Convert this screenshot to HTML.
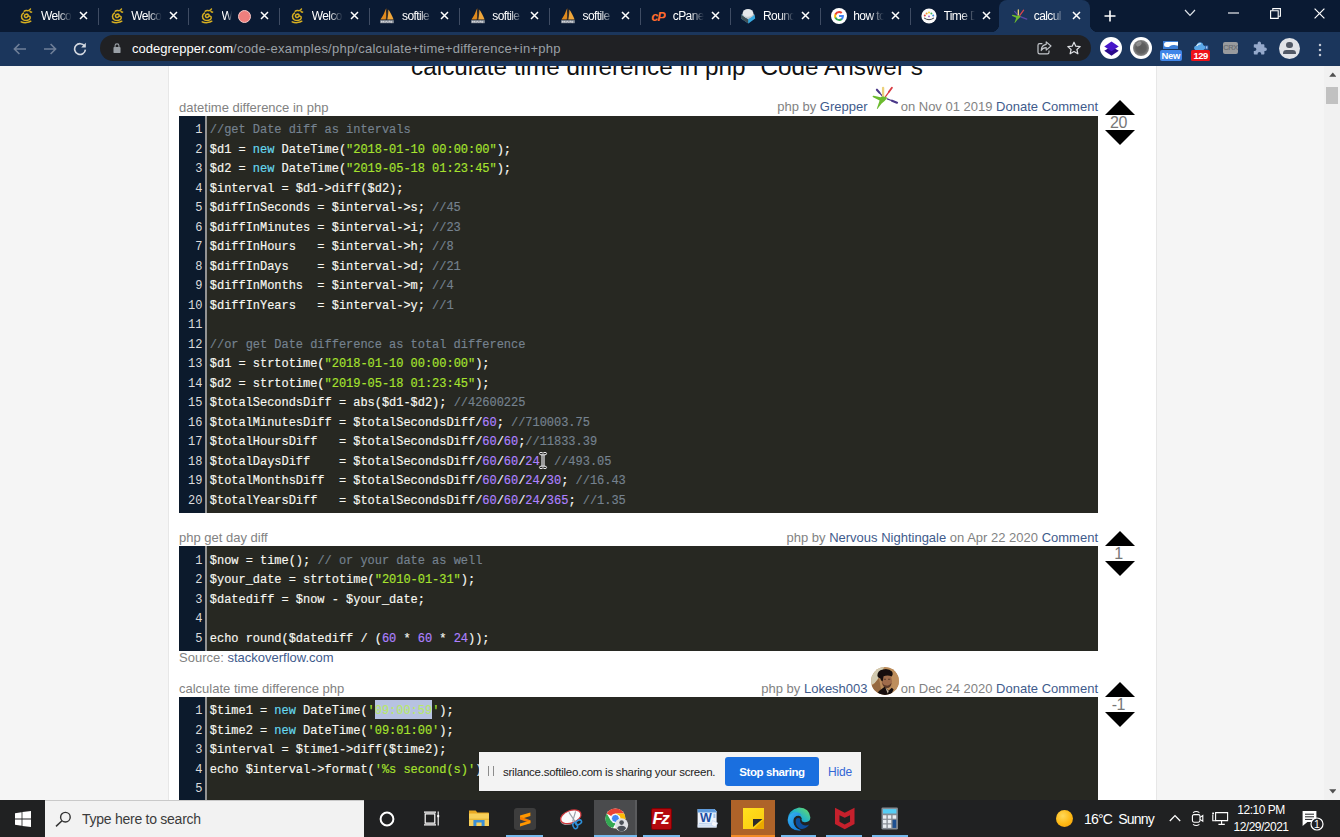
<!DOCTYPE html>
<html lang="en">
<head>
<meta charset="utf-8">
<title>calculate time difference in php Code Example</title>
<style>
*{box-sizing:border-box;}
html,body{margin:0;padding:0;}
body{width:1340px;height:837px;overflow:hidden;position:relative;background:#f5f5f5;font-family:"Liberation Sans",Arial,sans-serif;}
.abs{position:absolute;}
/* ---------- browser chrome ---------- */
#tabstrip{position:absolute;left:0;top:0;width:1340px;height:32px;background:#0a1a33;}
#toolbar{position:absolute;left:0;top:32px;width:1340px;height:34px;background:#1b365c;}
.tab{position:absolute;top:0;height:32px;width:90px;color:#fff;font-size:12px;}
.tab .fav{position:absolute;left:10.4px;top:8px;}
.tab .ttl{position:absolute;left:33px;top:8px;overflow:hidden;white-space:nowrap;line-height:16px;letter-spacing:-0.6px;-webkit-mask-image:linear-gradient(90deg,#000 55%,transparent 100%);mask-image:linear-gradient(90deg,#000 55%,transparent 100%);}
.tab .x{position:absolute;left:71px;top:11.2px;}
.tab .sep{position:absolute;left:90px;top:8px;width:1px;height:17px;background:#3f4c63;}
.tab .rec{position:absolute;left:49.5px;top:9.5px;width:13px;height:13px;border-radius:50%;background:#ee7f7d;border:1.5px solid #f7c9c7;}
#activetab{position:absolute;left:999px;top:0;width:91px;height:32px;background:#1b365c;border-radius:8px 8px 0 0;}
#activetab:before,#activetab:after{content:"";position:absolute;bottom:0;width:8px;height:8px;}
#activetab:before{left:-8px;background:radial-gradient(circle at 0 0,transparent 8px,#1b365c 8.5px);}
#activetab:after{right:-8px;background:radial-gradient(circle at 100% 0,transparent 8px,#1b365c 8.5px);}
#urlpill{position:absolute;left:100px;top:3.4px;width:991px;height:26px;border-radius:13px;background:#202124;}
#url{position:absolute;left:32px;top:5.5px;font-size:13px;line-height:16px;color:#9aa0a6;white-space:nowrap;letter-spacing:0.235px;}
#url b{font-weight:normal;color:#fff;letter-spacing:0.04px;}
/* ---------- page ---------- */
#page{position:absolute;left:0;top:66px;width:1324px;height:734px;background:#f5f5f5;overflow:hidden;}
#col{position:absolute;left:168px;top:0;width:989px;height:734px;background:#fff;border-left:1px solid #e7e7e7;border-right:1px solid #e7e7e7;}
#scroll{position:absolute;left:1324px;top:66px;width:16px;height:734px;background:#f1f1f1;}

/* ---------- answers ---------- */
.hd{position:absolute;left:10px;width:919px;height:18px;font-size:13px;line-height:18px;color:#828282;white-space:nowrap;}
.hd .ic{display:inline-block;width:25.9px;height:10px;position:relative;vertical-align:baseline;}
.hd .l{position:absolute;left:0;top:0;}
.hd .r{position:absolute;right:0;top:0;}
.hd .r.up{top:-0.6px;}
.hd a,.src a{color:#3f5b8c;text-decoration:none;}
.cb{position:absolute;left:10px;width:919px;background:#272822;overflow:hidden;}
.cb .gut{position:absolute;left:0;top:0;bottom:0;width:28px;background:#0c1a2c;border-right:2px solid #939393;}
.cb .ln,.cb .cl{font-family:"Liberation Mono","DejaVu Sans Mono",monospace;font-size:12px;line-height:19.5px;height:19.5px;white-space:pre;letter-spacing:-0.03px;}
.cb .cl{-webkit-text-stroke:0.16px;}
.cb .nums{position:absolute;left:0;top:5.8px;width:23.4px;text-align:right;color:#dcdcdc;}
.cb .code{position:absolute;left:30.8px;top:5.8px;color:#f8f8f2;}
.c{color:#75828f;}.s{color:#a6e22e;}.k{color:#66d9ef;}.n{color:#ae81ff;}
.sel{color:#b9e86b;display:inline-block;height:19.5px;vertical-align:top;position:relative;isolation:isolate;}
.sel:before{content:"";position:absolute;left:0;right:0;top:-2.9px;height:19.9px;background:#b7c2e2;z-index:-1;}
.src{position:absolute;left:10px;font-size:13px;line-height:18px;color:#828282;white-space:nowrap;}
.vote{position:absolute;left:935.6px;width:30px;height:45px;}
.vote .up{position:absolute;left:0;top:0;width:0;height:0;border-left:15px solid transparent;border-right:15px solid transparent;border-bottom:15px solid #000;}
.vote .dn{position:absolute;left:0;top:30px;width:0;height:0;border-left:15px solid transparent;border-right:15px solid transparent;border-top:15px solid #000;}
.vote .v{position:absolute;left:-1.2px;top:14.2px;width:30px;text-align:center;font-size:16px;line-height:18px;color:#777;letter-spacing:-0.5px;}
#h1{position:absolute;left:0;top:-13px;width:988px;text-align:center;font-size:24.3px;line-height:28px;color:#111;white-space:nowrap;}
/* ---------- taskbar ---------- */
#taskbar{position:absolute;left:0;top:800px;width:1340px;height:37px;background:#202122;}
#search{position:absolute;left:45px;top:0;width:319px;height:37px;background:#f2f2f2;border-top:1px solid #c9c9c9;}
.ul{position:absolute;top:35px;height:2px;background:#76b9ed;}
.tk{position:absolute;top:0;height:37px;}
#stxt{position:absolute;left:37px;top:9px;font-size:14px;line-height:18px;color:#3b3b3b;letter-spacing:-0.26px;white-space:nowrap;}
.tray{position:absolute;color:#fff;white-space:nowrap;}
/* share bar */
#share{position:absolute;left:479px;top:752px;width:382px;height:39px;background:#f3f3f3;font-size:12px;color:#222;box-shadow:0 0 1px rgba(0,0,0,.5);}
#share .t{position:absolute;left:24px;top:11.5px;line-height:16px;white-space:nowrap;font-size:11.5px;letter-spacing:-0.24px;}
#share .b{position:absolute;left:246px;top:5px;width:94px;height:29px;border-radius:3px;background:#1a6fdf;color:#fff;font-weight:bold;text-align:center;line-height:30.5px;font-size:11.5px;letter-spacing:-0.4px;}
#share .h{position:absolute;left:349px;top:11.5px;line-height:16px;color:#3367d6;letter-spacing:-0.2px;}
#share .g{position:absolute;left:9px;top:14px;width:6px;height:10px;border-left:1.5px solid #8c8c8c;border-right:1.5px solid #8c8c8c;}
</style>
</head>
<body>
<div id="tabstrip"><div id="activetab"></div>
<div class="tab" style="left:8.00px"><svg class="fav" width="16" height="16" viewBox="0 0 16 16" fill="none" stroke="#d6ae20" stroke-width="1.5" stroke-linecap="round"><path d="M10.2 7.2C9.4 5.6 6.6 5.8 6.4 7.8C6.2 9.6 8.6 10 9.4 8.8M9.4 8.8C10.4 7.4 12.6 8 12.2 10.2C11.8 12.4 8 13.2 5.4 11.8C2.6 10.2 3 6.4 5.6 5M3.2 13.8C6 15.2 10.8 14.8 12.8 13.2"/><path d="M6.2 3.2C7.6 1.8 9.6 3.2 11 2.4C11.8 2 12.2 1.4 12.4 1"/><path d="M12 3.4C12.6 4.2 13.2 4.4 13.6 4"/></svg><span class="ttl" style="width:31px">Welco</span><svg class="x" width="9" height="9" viewBox="0 0 9 9"><path d="M1 1L8 8M8 1L1 8" stroke="#fff" stroke-width="1.5"/></svg><span class="sep"></span></div>
<div class="tab" style="left:98.25px"><svg class="fav" width="16" height="16" viewBox="0 0 16 16" fill="none" stroke="#d6ae20" stroke-width="1.5" stroke-linecap="round"><path d="M10.2 7.2C9.4 5.6 6.6 5.8 6.4 7.8C6.2 9.6 8.6 10 9.4 8.8M9.4 8.8C10.4 7.4 12.6 8 12.2 10.2C11.8 12.4 8 13.2 5.4 11.8C2.6 10.2 3 6.4 5.6 5M3.2 13.8C6 15.2 10.8 14.8 12.8 13.2"/><path d="M6.2 3.2C7.6 1.8 9.6 3.2 11 2.4C11.8 2 12.2 1.4 12.4 1"/><path d="M12 3.4C12.6 4.2 13.2 4.4 13.6 4"/></svg><span class="ttl" style="width:31px">Welco</span><svg class="x" width="9" height="9" viewBox="0 0 9 9"><path d="M1 1L8 8M8 1L1 8" stroke="#fff" stroke-width="1.5"/></svg><span class="sep"></span></div>
<div class="tab" style="left:188.50px"><svg class="fav" width="16" height="16" viewBox="0 0 16 16" fill="none" stroke="#d6ae20" stroke-width="1.5" stroke-linecap="round"><path d="M10.2 7.2C9.4 5.6 6.6 5.8 6.4 7.8C6.2 9.6 8.6 10 9.4 8.8M9.4 8.8C10.4 7.4 12.6 8 12.2 10.2C11.8 12.4 8 13.2 5.4 11.8C2.6 10.2 3 6.4 5.6 5M3.2 13.8C6 15.2 10.8 14.8 12.8 13.2"/><path d="M6.2 3.2C7.6 1.8 9.6 3.2 11 2.4C11.8 2 12.2 1.4 12.4 1"/><path d="M12 3.4C12.6 4.2 13.2 4.4 13.6 4"/></svg><span class="ttl" style="width:10px">W</span><span class="rec"></span><svg class="x" width="9" height="9" viewBox="0 0 9 9"><path d="M1 1L8 8M8 1L1 8" stroke="#fff" stroke-width="1.5"/></svg><span class="sep"></span></div>
<div class="tab" style="left:278.75px"><svg class="fav" width="16" height="16" viewBox="0 0 16 16" fill="none" stroke="#d6ae20" stroke-width="1.5" stroke-linecap="round"><path d="M10.2 7.2C9.4 5.6 6.6 5.8 6.4 7.8C6.2 9.6 8.6 10 9.4 8.8M9.4 8.8C10.4 7.4 12.6 8 12.2 10.2C11.8 12.4 8 13.2 5.4 11.8C2.6 10.2 3 6.4 5.6 5M3.2 13.8C6 15.2 10.8 14.8 12.8 13.2"/><path d="M6.2 3.2C7.6 1.8 9.6 3.2 11 2.4C11.8 2 12.2 1.4 12.4 1"/><path d="M12 3.4C12.6 4.2 13.2 4.4 13.6 4"/></svg><span class="ttl" style="width:31px">Welco</span><svg class="x" width="9" height="9" viewBox="0 0 9 9"><path d="M1 1L8 8M8 1L1 8" stroke="#fff" stroke-width="1.5"/></svg><span class="sep"></span></div>
<div class="tab" style="left:369.00px"><svg class="fav" width="16" height="16" viewBox="0 0 16 16"><path d="M6.6 0.8C7.4 4.6 7.4 8 6.8 11.4H1.4C3.8 8.6 5.6 5 6.6 0.8Z" fill="#e08a1e"/><path d="M9.4 1.6C11.4 4.6 13.2 8 14.6 11.4H8.2C9 8.2 9.4 5 9.4 1.6Z" fill="#f0a63a"/><path d="M7.6 0.6C8.4 4 8.2 8 7.6 11.4" stroke="#7a4a12" stroke-width="0.7" fill="none"/><rect x="1.2" y="12.2" width="13.6" height="3" fill="#8d939c"/><path d="M2.4 14.6V12.9L3.6 14.2L4.8 12.9V14.6M6.2 14.6L7.4 12.9L8.6 14.6M10 14.6V12.9L12.4 14.6V12.9" stroke="#e9ebef" stroke-width="0.7" fill="none"/></svg><span class="ttl" style="width:31px">softile</span><svg class="x" width="9" height="9" viewBox="0 0 9 9"><path d="M1 1L8 8M8 1L1 8" stroke="#fff" stroke-width="1.5"/></svg><span class="sep"></span></div>
<div class="tab" style="left:459.25px"><svg class="fav" width="16" height="16" viewBox="0 0 16 16"><path d="M6.6 0.8C7.4 4.6 7.4 8 6.8 11.4H1.4C3.8 8.6 5.6 5 6.6 0.8Z" fill="#e08a1e"/><path d="M9.4 1.6C11.4 4.6 13.2 8 14.6 11.4H8.2C9 8.2 9.4 5 9.4 1.6Z" fill="#f0a63a"/><path d="M7.6 0.6C8.4 4 8.2 8 7.6 11.4" stroke="#7a4a12" stroke-width="0.7" fill="none"/><rect x="1.2" y="12.2" width="13.6" height="3" fill="#8d939c"/><path d="M2.4 14.6V12.9L3.6 14.2L4.8 12.9V14.6M6.2 14.6L7.4 12.9L8.6 14.6M10 14.6V12.9L12.4 14.6V12.9" stroke="#e9ebef" stroke-width="0.7" fill="none"/></svg><span class="ttl" style="width:31px">softile</span><svg class="x" width="9" height="9" viewBox="0 0 9 9"><path d="M1 1L8 8M8 1L1 8" stroke="#fff" stroke-width="1.5"/></svg><span class="sep"></span></div>
<div class="tab" style="left:549.50px"><svg class="fav" width="16" height="16" viewBox="0 0 16 16"><path d="M6.6 0.8C7.4 4.6 7.4 8 6.8 11.4H1.4C3.8 8.6 5.6 5 6.6 0.8Z" fill="#e08a1e"/><path d="M9.4 1.6C11.4 4.6 13.2 8 14.6 11.4H8.2C9 8.2 9.4 5 9.4 1.6Z" fill="#f0a63a"/><path d="M7.6 0.6C8.4 4 8.2 8 7.6 11.4" stroke="#7a4a12" stroke-width="0.7" fill="none"/><rect x="1.2" y="12.2" width="13.6" height="3" fill="#8d939c"/><path d="M2.4 14.6V12.9L3.6 14.2L4.8 12.9V14.6M6.2 14.6L7.4 12.9L8.6 14.6M10 14.6V12.9L12.4 14.6V12.9" stroke="#e9ebef" stroke-width="0.7" fill="none"/></svg><span class="ttl" style="width:31px">softile</span><svg class="x" width="9" height="9" viewBox="0 0 9 9"><path d="M1 1L8 8M8 1L1 8" stroke="#fff" stroke-width="1.5"/></svg><span class="sep"></span></div>
<div class="tab" style="left:639.75px"><svg class="fav" width="16" height="16" viewBox="0 0 16 16"><text x="8" y="12.6" text-anchor="middle" font-family="Liberation Sans, sans-serif" font-size="12.5" font-weight="bold" font-style="italic" fill="#ff6c2c" letter-spacing="-0.8">cP</text></svg><span class="ttl" style="width:31px">cPanel</span><svg class="x" width="9" height="9" viewBox="0 0 9 9"><path d="M1 1L8 8M8 1L1 8" stroke="#fff" stroke-width="1.5"/></svg><span class="sep"></span></div>
<div class="tab" style="left:730.00px"><svg class="fav" width="16" height="16" viewBox="0 0 16 16"><path d="M1 10.4L8.4 15.4L15.2 10.6L14.6 6.6L8.2 10.6L1.6 6.2Z" fill="#37a9e1"/><path d="M1.2 6.6L8.2 11.4V15.6L1 10.6Z" fill="#404f54"/><ellipse cx="8" cy="5.6" rx="5.4" ry="4.6" fill="#e6e8ea"/><path d="M2.6 6C4 9.6 11.6 10 13.4 5.8L14.4 7L8.2 11.2L1.6 6.8Z" fill="#c5c9cc"/></svg><span class="ttl" style="width:31px">Round</span><svg class="x" width="9" height="9" viewBox="0 0 9 9"><path d="M1 1L8 8M8 1L1 8" stroke="#fff" stroke-width="1.5"/></svg><span class="sep"></span></div>
<div class="tab" style="left:820.25px"><svg class="fav" width="16" height="16" viewBox="0 0 16 16"><circle cx="8" cy="8" r="8" fill="#fff"/><path d="M12.9 8.1c0-.36-.03-.7-.09-1.03H8.1v1.96h2.7a2.3 2.3 0 0 1-1 1.5v1.26h1.62c.95-.87 1.48-2.15 1.48-3.69z" fill="#4285f4"/><path d="M8.1 13c1.35 0 2.48-.45 3.31-1.21l-1.62-1.26c-.45.3-1.02.48-1.69.48-1.3 0-2.4-.88-2.8-2.06H3.63v1.3A5 5 0 0 0 8.1 13z" fill="#34a853"/><path d="M5.3 8.95a3 3 0 0 1 0-1.9v-1.3H3.63a5 5 0 0 0 0 4.5l1.67-1.3z" fill="#fbbc05"/><path d="M8.1 4.99c.73 0 1.39.25 1.9.75l1.43-1.43A4.8 4.8 0 0 0 8.1 3a5 5 0 0 0-4.47 2.75l1.67 1.3c.4-1.18 1.5-2.06 2.8-2.06z" fill="#ea4335"/></svg><span class="ttl" style="width:31px">how to</span><svg class="x" width="9" height="9" viewBox="0 0 9 9"><path d="M1 1L8 8M8 1L1 8" stroke="#fff" stroke-width="1.5"/></svg><span class="sep"></span></div>
<div class="tab" style="left:910.50px"><svg class="fav" width="16" height="16" viewBox="0 0 16 16"><circle cx="8" cy="8" r="7.6" fill="#fbfbfb"/><path d="M3.4 10.2Q8 13.4 12.6 10.2" stroke="#3b3b3b" stroke-width="1" fill="none" stroke-linecap="round"/><circle cx="3.8" cy="7.6" r="1" fill="#e8453c"/><circle cx="5.6" cy="5.4" r="1" fill="#f29a2e"/><circle cx="8" cy="4.4" r="1" fill="#f3d232"/><circle cx="10.4" cy="5.4" r="1" fill="#3eb55f"/><circle cx="12.2" cy="7.6" r="1" fill="#3d8be0"/><circle cx="8" cy="8.4" r="0.9" fill="#9a59c9"/></svg><span class="ttl" style="width:31px">Time D</span><svg class="x" width="9" height="9" viewBox="0 0 9 9"><path d="M1 1L8 8M8 1L1 8" stroke="#fff" stroke-width="1.5"/></svg></div>
<div class="tab" style="left:1000.75px"><svg class="fav" width="17" height="16" viewBox="0 0 28 25" style="overflow:visible"><g stroke-linecap="round" fill="none"><path d="M11.6 11.4L5.9 4.9" stroke="#5b48a8" stroke-width="2"/><path d="M12.1 11V2.6" stroke="#ecd078" stroke-width="2.2"/><path d="M14.5 11.6L20.8 2.9" stroke="#e0454c" stroke-width="2"/><path d="M16.2 13.9L26 17.6" stroke="#5b48a8" stroke-width="2"/></g><path d="M1.6 11.2Q1.8 10.3 3 10.6L9.4 12.2Q12.5 10.6 16.4 12.8Q14 16 10.6 18.6L6.4 23.9Q5.8 24.2 5.9 23.4L8.6 15.2L2.2 12.4Q1.4 12 1.6 11.2Z" fill="#6cbb2f"/></svg><span class="ttl" style="width:31px">calcul</span><svg class="x" width="9" height="9" viewBox="0 0 9 9"><path d="M1 1L8 8M8 1L1 8" stroke="#fff" stroke-width="1.5"/></svg></div>
<svg class="abs" style="left:1104px;top:10px" width="12" height="12" viewBox="0 0 12 12"><path d="M6 0.5V11.5M0.5 6H11.5" stroke="#fff" stroke-width="1.6"/></svg>
<svg class="abs" style="left:1184px;top:9px" width="12" height="8" viewBox="0 0 12 8"><path d="M1 1L6 6.4L11 1" stroke="#dfe3ea" stroke-width="1.2" fill="none"/></svg>
<svg class="abs" style="left:1228px;top:12px" width="11" height="2" viewBox="0 0 11 2"><path d="M0 1H11" stroke="#fff" stroke-width="1.1"/></svg>
<svg class="abs" style="left:1270px;top:8px" width="11" height="11" viewBox="0 0 11 11"><path d="M0.6 2.8H8.2V10.4H0.6Z" stroke="#fff" stroke-width="1.1" fill="none"/><path d="M2.8 2.6V0.6H10.4V8.2H8.4" stroke="#fff" stroke-width="1.1" fill="none"/></svg>
<svg class="abs" style="left:1314px;top:8px" width="11" height="11" viewBox="0 0 11 11"><path d="M0.6 0.6L10.4 10.4M10.4 0.6L0.6 10.4" stroke="#fff" stroke-width="1.2"/></svg>
</div>
<div id="toolbar"><svg class="abs" style="left:13px;top:11px" width="14" height="12" viewBox="0 0 14 12"><path d="M13 6H1.6M6.4 1L1.4 6L6.4 11" stroke="#6f7f98" stroke-width="1.6" fill="none"/></svg>
<svg class="abs" style="left:43px;top:11px" width="14" height="12" viewBox="0 0 14 12"><path d="M1 6H12.4M7.6 1L12.6 6L7.6 11" stroke="#6f7f98" stroke-width="1.6" fill="none"/></svg>
<svg class="abs" style="left:73px;top:10px" width="14" height="14" viewBox="0 0 14 14"><path d="M11.6 4.2A5.4 5.4 0 1 0 12.4 7.6" stroke="#d4d9e1" stroke-width="1.6" fill="none"/><path d="M12.8 0.8V5.4H8.2Z" fill="#d4d9e1"/></svg>
<div class="abs" style="left:1100px;top:5px;width:22.4px;height:22.4px;border-radius:50%;background:#fff"><svg class="abs" style="left:2.7px;top:2.7px" width="17" height="17" viewBox="0 0 16 16"><path d="M8 6.2L14.8 10.2L8 14.8L1.2 10.2Z" fill="#2a0a8c"/><path d="M8 1.4L14.8 6L8 10.6L1.2 6Z" fill="#4716c9"/></svg></div>
<div class="abs" style="left:1129.8px;top:5px;width:22.4px;height:22.4px;border-radius:50%;background:#fff"><div class="abs" style="left:3.2px;top:3.2px;width:16px;height:16px;border-radius:50%;background:radial-gradient(circle at 50% 50%,#5a5a5a 0,#606060 45%,#8a8a8a 72%,#f4f4f4 100%)"></div><div class="abs" style="left:6.4px;top:5.4px;width:6px;height:4.4px;border-radius:50%;background:rgba(255,255,255,.28);transform:rotate(-35deg)"></div></div>
<div class="abs" style="left:1163.4px;top:9px;width:15px;height:8px;background:#3e7fd6;overflow:hidden"><div class="abs" style="left:0.6px;top:0.8px;width:13.6px;height:5.6px;border-radius:3px 0 0 3px;background:#fff"></div><div class="abs" style="left:5px;top:4px;width:12px;height:6px;border-radius:6px 0 0 0;background:#3e7fd6;transform:rotate(10deg)"></div></div>
<div class="abs" style="left:1159.6px;top:18.4px;width:22.4px;height:11px;border-radius:2px;background:#4086e8;color:#fff;font-size:9.5px;line-height:11px;font-weight:bold;text-align:center;letter-spacing:-0.3px">New</div>
<svg class="abs" style="left:1193px;top:8.6px" width="16" height="10" viewBox="0 0 17 11"><path d="M2.4 9.8Q0.4 9 1 6.8Q1.6 5 3.6 5.2Q4.2 1.6 7.6 1.4Q10.6 1.6 11.2 4.6Q13.4 4.8 13.2 7.4Q13 9.4 11 9.8Z" fill="#5aa7e8"/><path d="M3.6 5.4Q5.2 2.8 8.2 2.8" stroke="#e3f2fc" stroke-width="1.3" fill="none"/><rect x="13" y="5" width="3.4" height="4.4" fill="#3c6fb8"/><rect x="13.9" y="5.9" width="1.5" height="2.4" fill="#a9c8ee"/></svg>
<div class="abs" style="left:1191.4px;top:18.2px;width:18.6px;height:11px;border-radius:1.5px;background:#ee1219;color:#fff;font-size:9.5px;line-height:11px;font-weight:bold;text-align:center;letter-spacing:-0.45px">129</div>
<div class="abs" style="left:1223px;top:10px;width:15px;height:12px;border-radius:2px;background:#999b9e;color:#686b70;font-size:7.4px;line-height:12.5px;text-align:center;letter-spacing:-0.35px;-webkit-text-stroke:0.15px;overflow:hidden">CRX</div>
<svg class="abs" style="left:1252px;top:8px" width="15" height="16" viewBox="0 0 15 16"><path d="M5.6 3.2a1.7 1.7 0 0 1 3.4 0V4.2H11.6Q12.4 4.2 12.4 5V7.6H13.2a1.7 1.7 0 0 1 0 3.4H12.4V13.8Q12.4 14.6 11.6 14.6H9.2V13.8a1.8 1.8 0 0 0-3.6 0V14.6H2.6Q1.8 14.6 1.8 13.8V11H2.6a1.8 1.8 0 0 0 0-3.6H1.8V5Q1.8 4.2 2.6 4.2H5.6Z" fill="#95a9cb"/></svg>
<div class="abs" style="left:1279px;top:5.5px;width:21px;height:21px;border-radius:50%;background:#e1e3e8;overflow:hidden"><div class="abs" style="left:7.4px;top:4.6px;width:6.2px;height:6.2px;border-radius:50%;background:#515866"></div><div class="abs" style="left:4.2px;top:12px;width:12.6px;height:4.8px;border-radius:6px 6px 1px 1px;background:#515866"></div></div>
<svg class="abs" style="left:1318px;top:10.5px" width="4" height="14" viewBox="0 0 4 14"><circle cx="2" cy="2" r="1.25" fill="#c3c9d4"/><circle cx="2" cy="7" r="1.25" fill="#c3c9d4"/><circle cx="2" cy="12" r="1.25" fill="#c3c9d4"/></svg>
<div id="urlpill"><svg class="abs" style="left:13.4px;top:7.4px" width="8" height="10.6" viewBox="0 0 9 12"><rect x="0.5" y="4.6" width="8" height="6.8" rx="1" fill="#9aa0a6"/><path d="M2.3 5V3.2a2.2 2.2 0 0 1 4.4 0V5" stroke="#9aa0a6" stroke-width="1.2" fill="none"/></svg>
<svg class="abs" style="left:937px;top:6px" width="15" height="14" viewBox="0 0 15 14"><path d="M5.4 2.6H2.6Q1 2.6 1 4.2V11.2Q1 12.8 2.6 12.8H10.4Q12 12.8 12 11.2V9.6" stroke="#c4c7cc" stroke-width="1.2" fill="none"/><path d="M9.2 0.8L14 5L9.2 9.2V6.6Q5.8 6.6 4.2 9.6Q4.4 4.2 9.2 3.4Z" stroke="#c4c7cc" stroke-width="1.1" fill="none" stroke-linejoin="round"/></svg>
<svg class="abs" style="left:967px;top:6px" width="14" height="14" viewBox="0 0 14 14"><path d="M7 1.2L8.8 5.2L13.2 5.6L9.9 8.5L10.9 12.8L7 10.5L3.1 12.8L4.1 8.5L0.8 5.6L5.2 5.2Z" stroke="#dfe1e5" stroke-width="1.2" fill="none" stroke-linejoin="round"/></svg>
<div id="url"><b>codegrepper.com</b>/code-examples/php/calculate+time+difference+in+php</div></div></div>
<div id="page"><div id="col">
<div id="h1">“calculate time difference in php” Code Answer’s</div>
<div class="hd" style="top:32.7px"><span class="l">datetime difference in php</span><span class="r up">php by <a>Grepper</a> <span class="ic" id="gicon"><svg width="28" height="25" viewBox="0 0 28 25" style="position:absolute;left:-0.3px;top:-15.8px;overflow:visible"><g stroke-linecap="round" fill="none"><path d="M11.4 11.2L8.4 7.6" stroke="#4a3789" stroke-width="1.3"/><path d="M8.4 7.6L5.9 4.7" stroke="#4a3789" stroke-width="2.1"/><path d="M12.1 11V2.8" stroke="#ecd17c" stroke-width="2.3"/><path d="M14.5 11.6L18 6.8" stroke="#d93a41" stroke-width="1.2"/><path d="M18 6.8L20.9 2.8" stroke="#d93a41" stroke-width="1.9"/><path d="M16.2 13.9L21 15.7" stroke="#4a3789" stroke-width="1.2"/><path d="M21 15.7L26 17.7" stroke="#4a3789" stroke-width="2.2"/></g><path d="M1.6 11.3Q1.7 10.5 2.8 10.7L9.4 12.2Q12.5 10.6 16.4 12.8Q14 16 10.6 18.6L6.4 23.9Q5.8 24.2 5.9 23.4L8.6 15.4L2.2 12.2Q1.5 11.9 1.6 11.3Z" fill="#6cbb2f"/></svg></span> on Nov 01 2019 <a>Donate</a> <a>Comment</a></span></div>
<div class="cb" style="top:49.5px;height:397.5px"><div class="gut"></div><div class="nums"><div class="ln">1</div><div class="ln">2</div><div class="ln">3</div><div class="ln">4</div><div class="ln">5</div><div class="ln">6</div><div class="ln">7</div><div class="ln">8</div><div class="ln">9</div><div class="ln">10</div><div class="ln">11</div><div class="ln">12</div><div class="ln">13</div><div class="ln">14</div><div class="ln">15</div><div class="ln">16</div><div class="ln">17</div><div class="ln">18</div><div class="ln">19</div><div class="ln">20</div></div><div class="code"><div class="cl"><span class="c">//get Date diff as intervals</span></div><div class="cl">$d1 = <span class="k">new</span> DateTime(<span class="s">"2018-01-10 00:00:00"</span>);</div><div class="cl">$d2 = <span class="k">new</span> DateTime(<span class="s">"2019-05-18 01:23:45"</span>);</div><div class="cl">$interval = $d1-&gt;diff($d2);</div><div class="cl">$diffInSeconds = $interval-&gt;s; <span class="c">//45</span></div><div class="cl">$diffInMinutes = $interval-&gt;i; <span class="c">//23</span></div><div class="cl">$diffInHours   = $interval-&gt;h; <span class="c">//8</span></div><div class="cl">$diffInDays    = $interval-&gt;d; <span class="c">//21</span></div><div class="cl">$diffInMonths  = $interval-&gt;m; <span class="c">//4</span></div><div class="cl">$diffInYears   = $interval-&gt;y; <span class="c">//1</span></div><div class="cl"> </div><div class="cl"><span class="c">//or get Date difference as total difference</span></div><div class="cl">$d1 = strtotime(<span class="s">"2018-01-10 00:00:00"</span>);</div><div class="cl">$d2 = strtotime(<span class="s">"2019-05-18 01:23:45"</span>);</div><div class="cl">$totalSecondsDiff = abs($d1-$d2); <span class="c">//42600225</span></div><div class="cl">$totalMinutesDiff = $totalSecondsDiff/<span class="n">60</span>; <span class="c">//710003.75</span></div><div class="cl">$totalHoursDiff   = $totalSecondsDiff/<span class="n">60</span>/<span class="n">60</span>;<span class="c">//11833.39</span></div><div class="cl">$totalDaysDiff    = $totalSecondsDiff/<span class="n">60</span>/<span class="n">60</span>/<span class="n">24</span>; <span class="c">//493.05</span></div><div class="cl">$totalMonthsDiff  = $totalSecondsDiff/<span class="n">60</span>/<span class="n">60</span>/<span class="n">24</span>/<span class="n">30</span>; <span class="c">//16.43</span></div><div class="cl">$totalYearsDiff   = $totalSecondsDiff/<span class="n">60</span>/<span class="n">60</span>/<span class="n">24</span>/<span class="n">365</span>; <span class="c">//1.35</span></div></div></div>
<div class="vote" style="top:33.8px"><div class="up"></div><div class="v">20</div><div class="dn"></div></div>
<div class="hd" style="top:463.4px"><span class="l">php get day diff</span><span class="r">php by <a>Nervous Nightingale</a> on Apr 22 2020 <a>Comment</a></span></div>
<div class="cb" style="top:480px;height:105px"><div class="gut"></div><div class="nums"><div class="ln">1</div><div class="ln">2</div><div class="ln">3</div><div class="ln">4</div><div class="ln">5</div></div><div class="code"><div class="cl">$now = time(); <span class="c">// or your date as well</span></div><div class="cl">$your_date = strtotime(<span class="s">"2010-01-31"</span>);</div><div class="cl">$datediff = $now - $your_date;</div><div class="cl"> </div><div class="cl">echo round($datediff / (<span class="n">60</span> * <span class="n">60</span> * <span class="n">24</span>));</div></div></div>
<div class="src" style="top:583px">Source: <a>stackoverflow.com</a></div>
<div class="vote" style="top:465px"><div class="up"></div><div class="v">1</div><div class="dn"></div></div>
<div class="hd" style="top:614.1px"><span class="l">calculate time difference php</span><span class="r up">php by <a>Lokesh003</a> <span class="ic" id="avatar"><svg width="28" height="28" viewBox="0 0 28 28" style="position:absolute;left:-0.6px;top:-15.3px"><defs><clipPath id="avc"><circle cx="14" cy="14" r="13.9"/></clipPath><filter id="avb" x="-20%" y="-20%" width="140%" height="140%"><feGaussianBlur stdDeviation="0.65"/></filter></defs><g clip-path="url(#avc)"><rect width="28" height="28" fill="#ba8b5a"/><g filter="url(#avb)"><path d="M-2 -2H14L9 9L4 16L-2 19Z" fill="#d2cab0"/><path d="M-2 20L3 17L8 11L11 28H-2Z" fill="#96693f"/><path d="M20 2L30 2V26L22 22Z" fill="#be8e5c"/><ellipse cx="15.8" cy="14" rx="5.2" ry="6.6" fill="#a06c4b"/><path d="M11 15Q12 21 16 21Q20 21 20.5 16Q18 19 15.5 18.6Q12.5 18.5 11 15Z" fill="#5c3b29"/><path d="M6.4 9Q6 3.6 12 2.4Q18 1.2 21 4.6Q22.6 7.4 20.6 9.6Q17 7.6 12.6 9.2L11.6 14.4Q9.4 13.6 9.4 11.4Q6.8 11 6.4 9Z" fill="#15100c"/><path d="M6 27L8 24L13.6 19.8L17.6 23.8L20.8 20.8L22.6 22.6L20 28H5Z" fill="#17110d"/><path d="M14.4 20.8L17.7 24.2L16.8 26.6Z" fill="#c9b9a6"/><rect x="12.8" y="11.8" width="2.2" height="0.8" fill="#4a2f20"/><rect x="17" y="11.8" width="2.2" height="0.8" fill="#4a2f20"/></g></g></svg></span> on Dec 24 2020 <a>Donate</a> <a>Comment</a></span></div>
<div class="cb" style="top:630.6px;height:120px"><div class="gut"></div><div class="nums"><div class="ln">1</div><div class="ln">2</div><div class="ln">3</div><div class="ln">4</div><div class="ln">5</div><div class="ln">6</div></div><div class="code"><div class="cl">$time1 = <span class="k">new</span> DateTime(<span class="s">'<span class="sel">09:00:59</span>'</span>);</div><div class="cl">$time2 = <span class="k">new</span> DateTime(<span class="s">'09:01:00'</span>);</div><div class="cl">$interval = $time1-&gt;diff($time2);</div><div class="cl">echo $interval-&gt;format(<span class="s">'%s second(s)'</span>);</div><div class="cl"> </div><div class="cl"> </div></div></div>
<div class="vote" style="top:615.5px"><div class="up"></div><div class="v">-1</div><div class="dn"></div></div>
</div></div>
<div id="scroll"><svg class="abs" style="left:4.6px;top:5.8px" width="7.6" height="5" viewBox="0 0 9 6"><path d="M4.5 0.6L8.8 5.6H0.2Z" fill="#505050"/></svg><div class="abs" style="left:2px;top:21px;width:12px;height:17px;background:#c1c1c1"></div><svg class="abs" style="left:4.6px;top:723.4px" width="7.6" height="5" viewBox="0 0 9 6"><path d="M4.5 5.4L8.8 0.4H0.2Z" fill="#505050"/></svg></div>
<div id="share"><div class="g"></div><div class="t">srilance.softileo.com is sharing your screen.</div><div class="b">Stop sharing</div><div class="h">Hide</div></div>
<svg class="abs" style="left:538px;top:451px" width="10" height="19" viewBox="0 0 10 19"><rect x="3" y="2.6" width="4" height="13.8" fill="#9b9b9b"/><path d="M1.4 2.6Q1.4 1.4 3 1.4Q4.4 1.4 5 2.4Q5.6 1.4 7 1.4Q8.6 1.4 8.6 2.6Q8.6 3.8 7 3.8H3Q1.4 3.8 1.4 2.6Z" fill="#2a2a2a" stroke="#fff" stroke-width="0.9"/><path d="M1.4 16.4Q1.4 15.2 3 15.2H7Q8.6 15.2 8.6 16.4Q8.6 17.6 7 17.6Q5.6 17.6 5 16.6Q4.4 17.6 3 17.6Q1.4 17.6 1.4 16.4Z" fill="#2a2a2a" stroke="#fff" stroke-width="0.9"/></svg>
<div id="taskbar">
<svg class="abs" style="left:15px;top:11px" width="16" height="16" viewBox="0 0 16 16"><path d="M0 2.2L6.6 1.2V7.6H0ZM7.4 1.1L16 0V7.6H7.4ZM0 8.4H6.6V14.8L0 13.8ZM7.4 8.4H16V16L7.4 14.9Z" fill="#fff"/></svg>
<div id="search"><svg class="abs" style="left:10px;top:10px" width="17" height="16" viewBox="0 0 17 16"><circle cx="10.4" cy="6.2" r="4.8" stroke="#333" stroke-width="1.4" fill="none"/><path d="M7 9.8L1 15.4" stroke="#333" stroke-width="1.5"/></svg><div id="stxt">Type here to search</div></div>
<svg class="abs" style="left:379px;top:11px" width="16" height="16" viewBox="0 0 16 16"><circle cx="8" cy="8" r="6.4" stroke="#fff" stroke-width="2" fill="none"/></svg>
<svg class="abs" style="left:422px;top:11px" width="18" height="15" viewBox="0 0 18 15"><path d="M3.2 2.8H12.8V12.2H3.2Z" stroke="#fff" stroke-width="1.2" fill="none"/><path d="M2 1.2H14M2 13.8H14" stroke="#fff" stroke-width="1.2"/><path d="M16.2 0.6V14.4" stroke="#fff" stroke-width="1.1"/><rect x="15.2" y="4" width="2" height="2.2" fill="#fff"/></svg>
<!-- file explorer -->
<svg class="abs" style="left:468px;top:9px" width="22" height="18" viewBox="0 0 22 18"><path d="M1 1.4H7.6L9.4 3.4H20.2Q21 3.4 21 4.2V6H1Z" fill="#e9a922"/><path d="M1 4.6H21V16.4Q21 17 20.4 17H1.6Q1 17 1 16.4Z" fill="#f8d05a"/><path d="M5.4 11H16.6V17H13.6V13.6H8.4V17H5.4Z" fill="#3b8fd6"/><rect x="1" y="9.6" width="20" height="1.4" fill="#e7b93b"/></svg>
<!-- sublime -->
<div class="abs" style="left:514px;top:8px;width:22px;height:22px;border-radius:3px;background:#3d3d3d"></div>
<svg class="abs" style="left:518px;top:11px" width="14" height="16" viewBox="0 0 14 16"><path d="M12.4 1.4L2 4.6V8.2L12.4 5Z" fill="#ff9800"/><path d="M2 5.6L12.4 9.2V12L2 8.4Z" fill="#f57c00"/><path d="M12.4 9.4L2 12.6V15.4L12.4 12.2Z" fill="#ff9800"/></svg>
<div class="ul" style="left:505.5px;width:37.5px"></div>
<!-- snipping tool -->
<svg class="abs" style="left:558px;top:7px" width="27" height="26" viewBox="0 0 27 26"><ellipse cx="12.4" cy="11.2" rx="10.6" ry="6.2" fill="#9a9fa6" transform="rotate(-20 12.4 11.2)"/><ellipse cx="12.8" cy="9.8" rx="10.6" ry="6.2" fill="#fbfbfc" stroke="#d0383c" stroke-width="1.2" transform="rotate(-20 12.8 9.8)"/><path d="M11 5.4L17.4 15M17.6 4.4L14.6 14.6" stroke="#9aa0a8" stroke-width="1.2"/><ellipse cx="17.2" cy="18.6" rx="2.2" ry="3.2" stroke="#2d8fd9" stroke-width="1.5" fill="none" transform="rotate(-20 17.2 18.6)"/><ellipse cx="20.6" cy="15.4" rx="3.2" ry="2" stroke="#2d8fd9" stroke-width="1.5" fill="none" transform="rotate(-30 20.6 15.4)"/></svg>
<!-- chrome -->
<div class="abs" style="left:594px;top:0;width:43px;height:37px;background:#4a4b4d"></div>
<div class="abs" style="left:634.5px;top:0;width:2px;height:37px;background:#5a5b5d"></div>
<svg class="abs" style="left:605px;top:8px" width="24" height="24" viewBox="0 0 24 24"><circle cx="10.4" cy="10.4" r="10" fill="#fff"/><path d="M10.4 0.4A10 10 0 0 1 19.06 5.4H10.4A5 5 0 0 0 6.07 7.9L1.74 5.4A10 10 0 0 1 10.4 0.4Z" fill="#e94335"/><path d="M1.74 5.4L6.07 12.9A5 5 0 0 0 10.4 15.4L6.1 19.5A10 10 0 0 1 1.74 5.4Z" fill="#34a853"/><path d="M19.06 5.4A10 10 0 0 1 10.4 20.4L14.73 12.9A5 5 0 0 0 14.73 7.9L10.4 5.4Z" fill="#fbbc05"/><path d="M6.07 12.9A5 5 0 0 0 10.4 15.4L8 20.1Q4 19 1.9 15.6Z" fill="#34a853"/><circle cx="10.4" cy="10.4" r="4" fill="#4285f4" stroke="#fff" stroke-width="1"/><circle cx="16.6" cy="16.8" r="6.6" fill="#dfe1e5"/><circle cx="16.6" cy="14.6" r="2.3" fill="#4a4f57"/><path d="M12.2 20.6Q12.6 17.8 16.6 17.8Q20.6 17.8 21 20.6Q19 23.4 16.6 23.4Q14 23.4 12.2 20.6Z" fill="#4a4f57"/></svg>
<div class="ul" style="left:594px;width:43px"></div>
<!-- filezilla -->
<div class="abs" style="left:650.5px;top:8px;width:21.5px;height:21.5px;border-radius:2px;background:#b4090e;border:1px solid #7c0004"></div>
<div class="abs" style="left:650.5px;top:8px;width:21.5px;height:21.5px;color:#fff;font-size:17px;font-weight:bold;font-style:italic;line-height:21px;text-align:center;letter-spacing:-1.6px;text-indent:-2px">Fz</div>
<div class="ul" style="left:643px;width:37px"></div>
<!-- word -->
<svg class="abs" style="left:696px;top:8px" width="22" height="22" viewBox="0 0 22 22"><path d="M1.6 1H18.4L20.6 3.2V19.4H1.6Z" fill="#eef3fb"/><path d="M1.6 1H18.4L20.6 3.2V4.4H1.6Z" fill="#5f9bdc"/><path d="M3 15.4H20M3 17.6H20" stroke="#b6cdee" stroke-width="1"/><path d="M1.6 16.6L20.6 14.6V19.4H1.6Z" fill="#d6e3f6" opacity="0.8"/><text x="10" y="13.8" text-anchor="middle" font-family="Liberation Sans, sans-serif" font-weight="bold" font-size="12.5" fill="#1d4fa3">W</text><path d="M16.4 12.6L21.8 15L19.4 19L15.2 17Z" fill="#f6f8fc" stroke="#b6cdee" stroke-width="0.5"/><rect x="17.4" y="5.6" width="2" height="4.4" fill="#9ec0ea"/></svg>
<!-- sticky notes -->
<div class="abs" style="left:730.5px;top:0;width:44.5px;height:37px;background:#ae6329"></div>
<div class="abs" style="left:743px;top:8px;width:21px;height:21px;background:linear-gradient(135deg,#ffe11e,#fbc90f)"></div>
<svg class="abs" style="left:752.5px;top:18.5px" width="11.5" height="10.5" viewBox="0 0 11.5 10.5"><path d="M11.5 0V10.5H0Z" fill="#eaa800"/><path d="M0 0H9.5L0 8Z" fill="#2b2b2b"/></svg>
<div class="ul" style="left:730.5px;width:44.5px;background:#f38b26"></div>
<!-- edge -->
<svg class="abs" style="left:786.5px;top:7px" width="24" height="24" viewBox="0 0 24 24"><defs><linearGradient id="eg1" x1="1" y1="0" x2="0.2" y2="1"><stop offset="0" stop-color="#6ee05a"/><stop offset="0.45" stop-color="#23b4c8"/><stop offset="1" stop-color="#0d60c6"/></linearGradient><linearGradient id="eg2" x1="0" y1="0" x2="1" y2="1"><stop offset="0" stop-color="#38b6f2"/><stop offset="1" stop-color="#1273d6"/></linearGradient></defs><path d="M12 0.6Q22.6 1.2 23.4 10.6Q23 15.6 17.4 15.2Q13.6 14.6 14.8 11.2Q13.4 7.6 9.6 8.8Q5.4 10.6 6.4 16Q8 21.8 14 23.2Q4 24.6 0.9 15.4Q-1 4 12 0.6Z" fill="url(#eg1)"/><path d="M0.8 13Q1.2 7.4 6.6 5.6Q12 4.4 14.6 8.6Q12.2 7.6 9.6 8.8Q5.4 10.6 6.4 16Q8 21.8 14 23.2Q2 24 0.8 13Z" fill="url(#eg2)"/><path d="M8.8 12.4Q7.8 18 12.6 21.4Q18 23.4 22.2 17.6Q18.6 19.4 15.4 17.6Q12.2 15.4 13.4 11.6Q10.4 10 8.8 12.4Z" fill="#0c4d9c"/></svg>
<div class="ul" style="left:781px;width:35px"></div>
<!-- mcafee -->
<svg class="abs" style="left:833.5px;top:7px" width="21.5" height="23" viewBox="0 0 22 23"><path d="M1 0.6L11 5.6L21 0.6V17.2L11 22.6L1 17.2Z" fill="#c5202c"/><path d="M5.6 8.2L11 10.8L16.4 8.2V14.8L11 17.6L5.6 14.8Z" fill="#202122"/></svg>
<div class="ul" style="left:826px;width:36px"></div>
<!-- calculator -->
<svg class="abs" style="left:881px;top:7px" width="17.4" height="23" viewBox="0 0 18 24"><rect x="0.4" y="0.4" width="17.2" height="23.2" rx="1.4" fill="#858b93"/><rect x="2" y="2.2" width="14" height="4.6" fill="#56cdf5"/><g fill="#e9edf2"><rect x="2" y="8.6" width="3.6" height="3.6"/><rect x="7" y="8.6" width="3.6" height="3.6"/><rect x="12" y="8.6" width="3.8" height="3.6"/><rect x="2" y="13.4" width="3.6" height="3.6"/><rect x="7" y="13.4" width="3.6" height="3.6"/><rect x="2" y="18.2" width="3.6" height="3.6"/><rect x="7" y="18.2" width="3.6" height="3.6"/></g><rect x="12" y="13.4" width="3.8" height="8.4" fill="#1d4f91"/></svg>
<div class="ul" style="left:872px;width:36px"></div>
<!-- tray -->
<div class="abs" style="left:1056px;top:10px;width:17px;height:17px;border-radius:50%;background:radial-gradient(circle at 40% 35%,#ffd95a 0,#fdb813 55%,#f59b0c 100%)"></div>
<div class="tray" style="left:1084px;top:10px;font-size:14px;line-height:18px;letter-spacing:-0.8px">16°C&nbsp; Sunny</div>
<svg class="abs" style="left:1169px;top:14px" width="12" height="8" viewBox="0 0 12 8"><path d="M0.8 7L6 1.6L11.2 7" stroke="#fff" stroke-width="1.3" fill="none"/></svg>
<svg class="abs" style="left:1191px;top:10px" width="13" height="17" viewBox="0 0 13 17"><rect x="1.4" y="4.6" width="7.6" height="7.6" rx="1.6" stroke="#fff" stroke-width="1.1" fill="none"/><path d="M9 7.4L11.8 5.6V11.2L9 9.4" stroke="#fff" stroke-width="1.1" fill="none"/><path d="M2 2.6Q5.2 0.4 8.4 2.6M2 14.4Q5.2 16.6 8.4 14.4" stroke="#fff" stroke-width="1.1" fill="none"/></svg>
<svg class="abs" style="left:1212px;top:11px" width="17" height="15" viewBox="0 0 17 15"><path d="M3.6 1.6H15.6V9.6H3.6Z" stroke="#fff" stroke-width="1.1" fill="none"/><path d="M9.6 9.6V13M6.4 13.4H12.8" stroke="#fff" stroke-width="1.1"/><path d="M0.8 3.4V9.8H3.4" stroke="#fff" stroke-width="1.1" fill="none"/><rect x="0.2" y="1.6" width="1.8" height="1.6" fill="#fff"/></svg>
<div class="tray" style="left:1231px;top:1.5px;width:60px;text-align:center;font-size:12px;line-height:17px;letter-spacing:-0.5px">12:10 PM<br>12/29/2021</div>
<svg class="abs" style="left:1301px;top:10px" width="24" height="22" viewBox="0 0 24 22"><path d="M1.6 1H15.4V12H6.4L1.6 16Z" fill="#fff"/><path d="M4 4.2H13M4 6.8H13M4 9.4H13" stroke="#1f2024" stroke-width="1"/><circle cx="16" cy="14" r="6" fill="#1f2024" stroke="#fff" stroke-width="1.2"/><text x="16" y="18" text-anchor="middle" font-family="Liberation Sans, sans-serif" font-size="10.5" fill="#fff">1</text></svg>
</div>
</body>
</html>
